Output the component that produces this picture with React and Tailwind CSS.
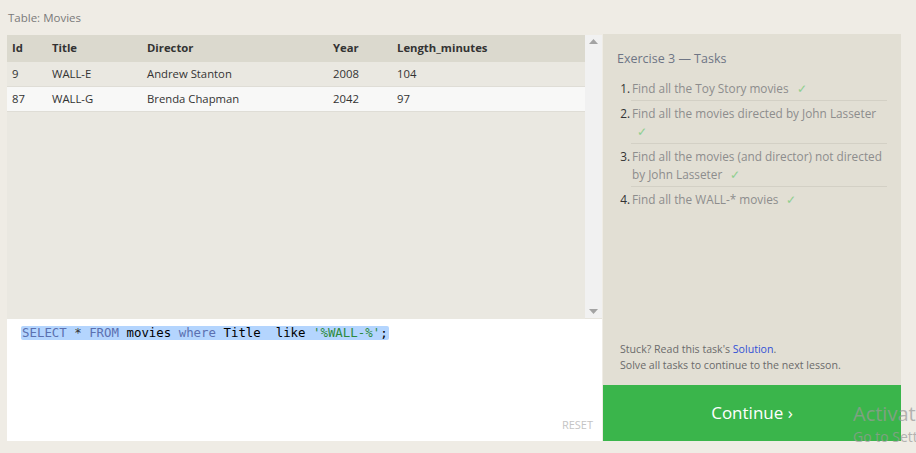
import React from "react";

const rows = [
  { id: "9", title: "WALL-E", director: "Andrew Stanton", year: "2008", len: "104", bg: "bg-[#eae8e1]" },
  { id: "87", title: "WALL-G", director: "Brenda Chapman", year: "2042", len: "97", bg: "bg-[#f8f8f7]" },
];

const tasks = [
  { n: "1.", text: "Find all the Toy Story movies" },
  { n: "2.", text: "Find all the movies directed by John Lasseter" },
  { n: "3.", text: "Find all the movies (and director) not directed by John Lasseter" },
  { n: "4.", text: "Find all the WALL-* movies" },
];

function Check() {
  return <span className="text-[#8fcf8f] ml-[8px]">✓</span>;
}

export default function App() {
  return (
    <div
      className="relative w-[916px] h-[453px] overflow-hidden bg-[#efece5]"
      style={{ fontFamily: '"Open Sans", "Noto Sans", sans-serif' }}
    >
      <div className="pl-[8px] pt-[10px] h-[35px] text-[11.5px] leading-[16px] text-[#7a7a7a]">Table: Movies</div>
      <div className="flex pl-[7px] pr-[15px]">
        {/* left column */}
        <div className="w-[595px] flex flex-col">
          <div className="h-[284px] flex bg-[#eae8e1]">
            <div className="flex-1 text-[11.3px] text-[#333]">
              <div className="flex h-[27px] items-center bg-[#dbd9ce] font-bold">
                <div className="w-[45px] pl-[5px]">Id</div>
                <div className="w-[95px]">Title</div>
                <div className="w-[186px]">Director</div>
                <div className="w-[64px]">Year</div>
                <div>Length_minutes</div>
              </div>
              {rows.map((r) => (
                <div key={r.id} className={`flex h-[25px] items-center border-b border-[#dfddd6] ${r.bg}`}>
                  <div className="w-[45px] pl-[5px]">{r.id}</div>
                  <div className="w-[95px]">{r.title}</div>
                  <div className="w-[186px]">{r.director}</div>
                  <div className="w-[64px]">{r.year}</div>
                  <div>{r.len}</div>
                </div>
              ))}
            </div>
            <div className="w-[17px] bg-[#f1f1f1] flex flex-col justify-between items-center py-[4px] border-b border-[#e6e4dd]">
              <svg width="9" height="5" viewBox="0 0 9 5"><path d="M0 5 L4.5 0 L9 5 Z" fill="#a3a3a3" /></svg>
              <svg width="9" height="5" viewBox="0 0 9 5"><path d="M0 0 L4.5 5 L9 0 Z" fill="#a3a3a3" /></svg>
            </div>
          </div>
          <div className="relative h-[122px] bg-white">
            <div
              className="absolute left-[14px] top-[7px] px-[1px] h-[14px] rounded-[2px] bg-[#b4d5fe] text-[12.4px] leading-[14px] whitespace-pre"
              style={{ fontFamily: '"DejaVu Sans Mono", "Liberation Mono", monospace' }}
            >
              <span className="text-[#5b70b0]">SELECT</span>
              <span className="text-[#333]"> * </span>
              <span className="text-[#5b70b0]">FROM</span>
              <span className="text-black"> movies </span>
              <span className="text-[#5b70b0]">where</span>
              <span className="text-black"> Title  like </span>
              <span className="text-[#2c8a3c]">'%WALL-%'</span>
              <span className="text-black">;</span>
            </div>
            <div className="absolute right-[9px] bottom-[8px] text-[11px] text-[#c4c4c4]">RESET</div>
          </div>
        </div>
        {/* right column */}
        <div className="ml-[1px] w-[298px] flex flex-col -mt-[1px]">
          <div className="h-[351px] bg-[#e2dfd4] flex flex-col px-[14px] pt-[16px] pb-[12px]">
            <div className="text-[12.5px] leading-[18px] text-[#6e7585]">Exercise 3 — Tasks</div>
            <ol className="mt-[8px] text-[11.8px] leading-[18px] text-[#8d8d8d]">
              {tasks.map((t, i) => (
                <li key={t.n} className="flex">
                  <span className="w-[14px] text-right pr-[1px] pt-[3px] text-[#333]">{t.n}</span>
                  <div className={`flex-1 pl-[1px] py-[3px] ${i < 3 ? "border-b border-[#d3d0c5]" : ""}`}>
                    {i === 1 ? (
                      <>
                        Find all the movies directed by John Lasseter
                        <div className="pl-[5px]"><span className="text-[#8fcf8f]">✓</span></div>
                      </>
                    ) : (
                      <>
                        {t.text}
                        <Check />
                      </>
                    )}
                  </div>
                </li>
              ))}
            </ol>
            <div className="mt-auto pl-[3px] text-[10.6px] leading-[16px] text-[#6b6b6b]">
              <div>
                Stuck? Read this task's <span className="text-[#3251d6]">Solution</span>.
              </div>
              <div>Solve all tasks to continue to the next lesson.</div>
            </div>
          </div>
          <div className="h-[56px] bg-[#3ab54b] flex items-center justify-center text-white text-[17px]">
            Continue ›
          </div>
        </div>
      </div>
      <div className="absolute left-[853px] top-[404px] text-[#9a9a9a] opacity-70 leading-none whitespace-nowrap">
        <div className="text-[20px]">Activate</div>
        <div className="text-[14px] mt-[6px]">Go to Settings</div>
      </div>
    </div>
  );
}
